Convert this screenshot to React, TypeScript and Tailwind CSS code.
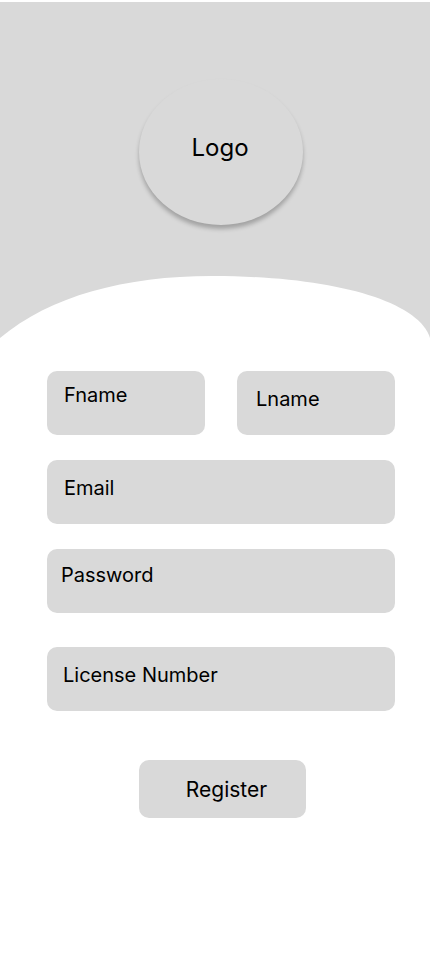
import type { InputHTMLAttributes } from "react";

type FieldProps = InputHTMLAttributes<HTMLInputElement> & { label: string };

function Field({ label, className = "", ...rest }: FieldProps) {
  return (
    <input
      aria-label={label}
      placeholder={label}
      className={`block h-16 w-full min-w-0 rounded-[10px] bg-[#d9d9d9] text-xl text-black outline-none placeholder:text-black focus:ring-2 focus:ring-gray-500 ${className}`}
      {...rest}
    />
  );
}

export default function App() {
  return (
    <main className="min-h-screen bg-white pt-0.5 font-['Inter',sans-serif] text-black">
      <header className="bg-[#d9d9d9] pt-[77px]">
        <div className="flex justify-center pl-3">
          <div className="flex h-[146px] w-[164px] items-center justify-center rounded-[50%] bg-[#d9d9d9] pr-0.5 pb-2 text-2xl shadow-[0_4px_4px_rgba(0,0,0,0.25)]">
            Logo
          </div>
        </div>
        <svg
          className="mt-[51px] block h-[62px] w-full"
          viewBox="0 0 430 62"
          preserveAspectRatio="none"
          aria-hidden="true"
        >
          <path d="M0 62C50 20 125 0 212 0C330 0 418 24 430 62Z" fill="#fff" />
        </svg>
      </header>

      <form className="pt-[33px] pr-[35px] pb-8 pl-[47px]" onSubmit={(e) => e.preventDefault()}>
        <div className="grid grid-cols-2 gap-8">
          <Field label="Fname" name="fname" className="px-[17px] pb-4" />
          <Field label="Lname" name="lname" className="px-[19px] pb-2" />
        </div>
        <div className="mt-[25px]">
          <Field label="Email" name="email" type="email" className="px-[17px] pb-2" />
        </div>
        <div className="mt-[25px]">
          <Field label="Password" name="password" type="password" className="px-3.5 pb-3" />
        </div>
        <div className="mt-[34px]">
          <Field label="License Number" name="license" className="px-4 pb-2" />
        </div>
        <div className="mt-[49px] flex justify-center pl-[3px]">
          <button
            type="submit"
            className="h-[58px] w-[167px] rounded-[10px] bg-[#d9d9d9] pt-0.5 pl-2 text-[21px]"
          >
            Register
          </button>
        </div>
      </form>
    </main>
  );
}
